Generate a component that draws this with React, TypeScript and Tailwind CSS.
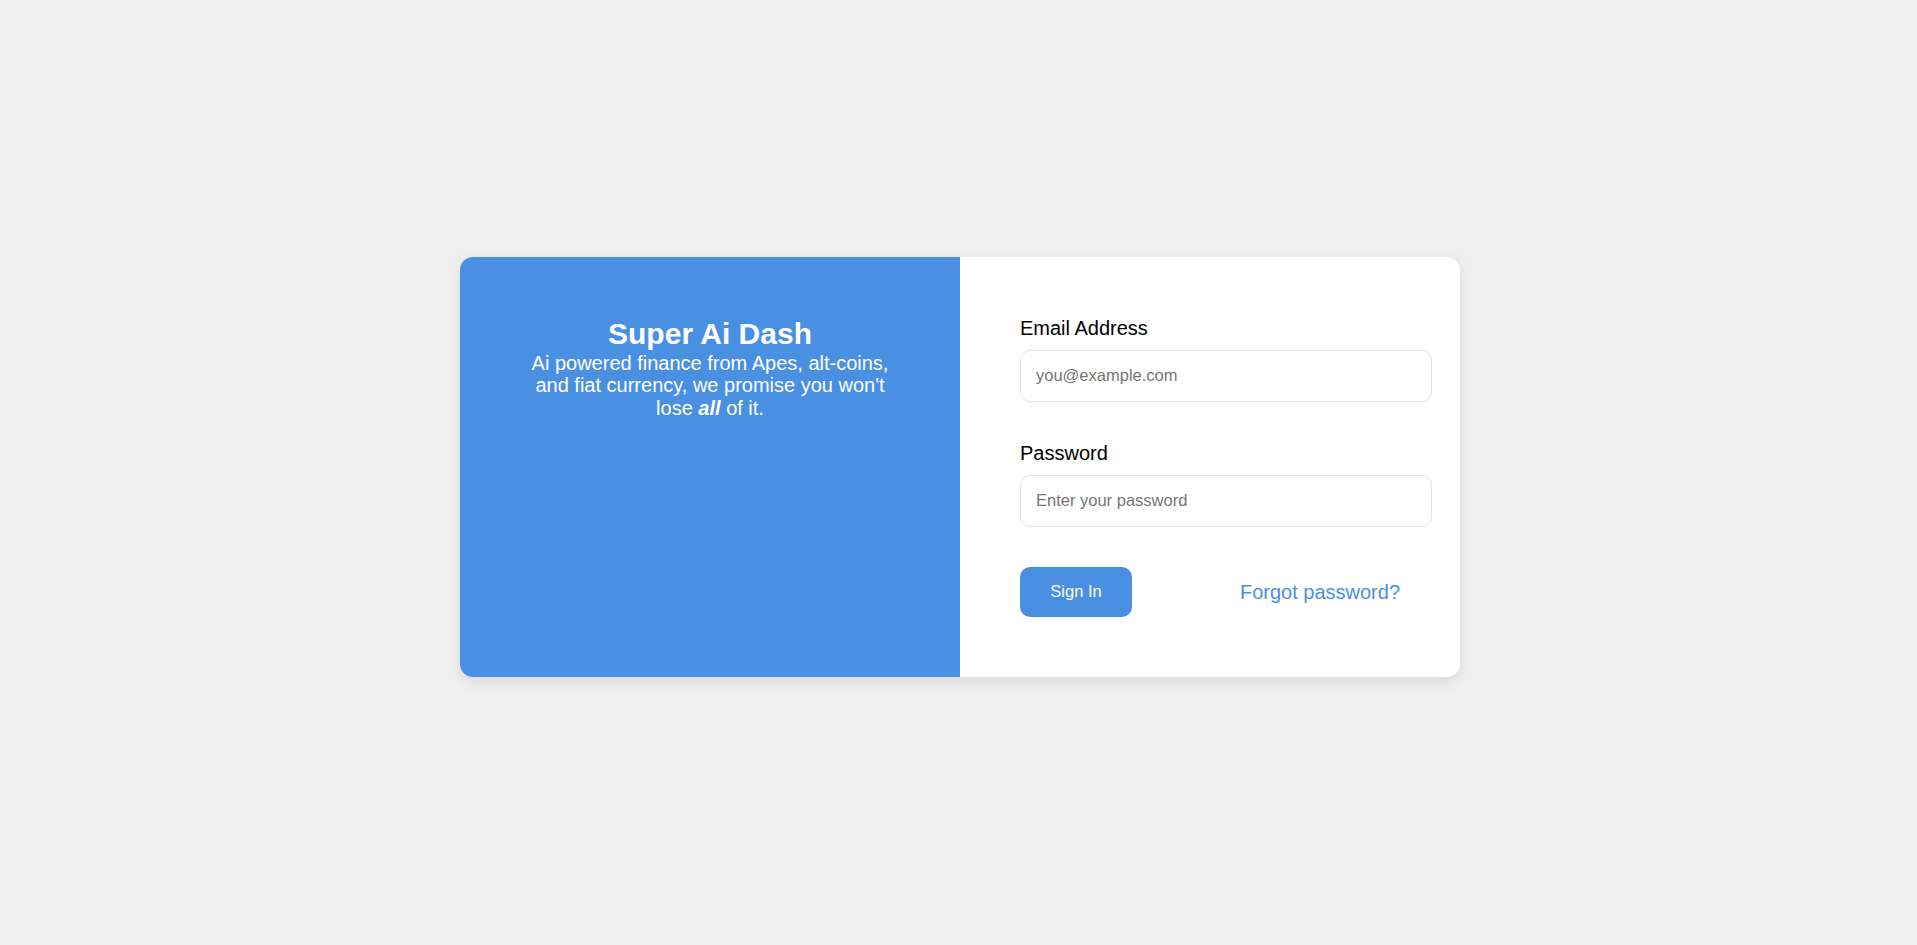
import React from "react";

export default function App() {
  return (
    <div
      className="min-h-screen bg-[#f0f0f0] flex items-center justify-center pb-[12px]"
      style={{ fontFamily: '"Liberation Sans", Arial, sans-serif' }}
    >
      <div className="flex w-[1000px] ml-[3px] rounded-[13px] overflow-hidden bg-white shadow-[0_4px_14px_rgba(0,0,0,0.1)]">
        {/* Brand panel */}
        <div className="w-[500px] shrink-0 bg-[#4a90e2] text-white pt-[60px] px-[60px]">
          <div className="text-center">
            <h1 className="text-[30px] font-bold leading-[34px]">Super Ai Dash</h1>
            <p className="text-[20px] leading-[22.5px] mt-[1px]">
              Ai powered finance from Apes, alt-coins, and fiat currency, we promise you won't lose{" "}
              <span className="font-bold italic">all</span> of it.
            </p>
          </div>
        </div>

        {/* Login form */}
        <div className="w-[500px] shrink-0 pt-[60px] pb-[60px] px-[60px]">
          <form onSubmit={(e) => e.preventDefault()}>
            <label className="block text-[20px] leading-[23px] text-black mb-[10px]">Email Address</label>
            <input
              type="email"
              placeholder="you@example.com"
              className="block w-[412px] max-w-none h-[52px] rounded-[10px] border border-[#e3e3e3] px-[15px] text-[16.5px] text-black placeholder:text-[#757575] outline-none"
            />

            <label className="block text-[20px] leading-[23px] text-black mt-[40px] mb-[10px]">Password</label>
            <input
              type="password"
              placeholder="Enter your password"
              className="block w-[412px] max-w-none h-[52px] rounded-[10px] border border-[#e3e3e3] px-[15px] text-[16.5px] text-black placeholder:text-[#757575] outline-none"
            />

            <div className="flex items-center justify-between mt-[40px]">
              <button
                type="submit"
                className="w-[112px] h-[50px] rounded-[10px] bg-[#4a90e2] text-white text-[16.5px]"
              >
                Sign In
              </button>
              <a href="#" className="text-[20px] text-[#4a90e2]">
                Forgot password?
              </a>
            </div>
          </form>
        </div>
      </div>
    </div>
  );
}
